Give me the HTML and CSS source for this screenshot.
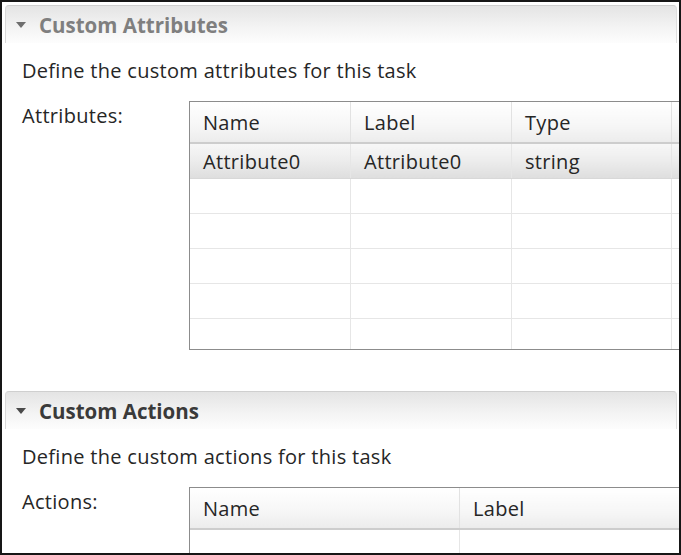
FILE: index.html
```html
<!DOCTYPE html>
<html lang="en">
<head>
    <meta charset="UTF-8">
    <title>Custom Attributes</title>
    <link rel="stylesheet" href="styles.css">
</head>
<body>
    <div class="frame">
        <div class="section-header inactive">
            <span class="twisty"></span>
            <span class="section-title">Custom Attributes</span>
        </div>
        <p class="description">Define the custom attributes for this task</p>
        <div class="field">
            <span class="field-label">Attributes:</span>
            <div class="table-box attributes">
                <table>
                    <thead>
                        <tr><th class="c1">Name</th><th class="c2">Label</th><th class="c3">Type</th><th></th></tr>
                    </thead>
                    <tbody>
                        <tr class="selected"><td>Attribute0</td><td>Attribute0</td><td>string</td><td></td></tr>
                        <tr><td></td><td></td><td></td><td></td></tr>
                        <tr><td></td><td></td><td></td><td></td></tr>
                        <tr><td></td><td></td><td></td><td></td></tr>
                        <tr><td></td><td></td><td></td><td></td></tr>
                        <tr class="last"><td></td><td></td><td></td><td></td></tr>
                    </tbody>
                </table>
            </div>
        </div>

        <div class="section-header second">
            <span class="twisty"></span>
            <span class="section-title">Custom Actions</span>
        </div>
        <p class="description">Define the custom actions for this task</p>
        <div class="field">
            <span class="field-label">Actions:</span>
            <div class="table-box actions">
                <table>
                    <thead>
                        <tr><th class="a1">Name</th><th>Label</th></tr>
                    </thead>
                    <tbody>
                        <tr><td></td><td></td></tr>
                        <tr><td></td><td></td></tr>
                    </tbody>
                </table>
            </div>
        </div>
    </div>
</body>
</html>
```

FILE: styles.css
```css
body {
    margin: 0;
    padding: 0;
    background: #ffffff;
    font-family: "Open Sans", "Noto Sans", sans-serif;
    color: #262626;
}

.frame {
    width: 681px;
    height: 555px;
    box-sizing: border-box;
    border: 2px solid #161616;
    overflow: hidden;
    background: #ffffff;
}

.section-header {
    height: 37px;
    margin: 3px 0 0 3px;
    display: flex;
    align-items: center;
    border-top: 1px solid #cfcfcf;
    border-left: 1px solid #d8d8d8;
    border-right: 1px solid #dedede;
    border-radius: 4px 4px 0 0;
    background: linear-gradient(#e4e4e4, #f3f3f3 55%, #fdfdfd);
    width: 670px;
}

.section-header.second {
    margin-top: 41px;
}

.twisty {
    width: 0;
    height: 0;
    margin: 0 13px 0 10px;
    border-left: 5px solid transparent;
    border-right: 5px solid transparent;
    border-top: 6px solid #4a4a4a;
}

.inactive .twisty {
    border-top-color: #6e6e6e;
}

.section-title {
    font-weight: bold;
    font-size: 20.5px;
    color: #3a3a3a;
}

.inactive .section-title {
    color: #7f7f7f;
}

.description {
    margin: 16px 0 0 20px;
    font-size: 20px;
    line-height: 24px;
    letter-spacing: 0.3px;
}

.field {
    display: flex;
    margin-top: 18px;
}

.field-label {
    flex: none;
    width: 167px;
    margin: 3px 0 0 20px;
    font-size: 20px;
    line-height: 24px;
    letter-spacing: 0.3px;
}

.table-box {
    flex: none;
    width: 520px;
    border: 1px solid #8c8c8c;
    border-right: none;
    overflow: hidden;
}

.table-box.attributes {
    height: 247px;
}

.table-box.actions {
    height: 80px;
}

table {
    border-collapse: collapse;
    width: 100%;
    table-layout: fixed;
}

th {
    height: 40px;
    padding: 0 0 0 13px;
    text-align: left;
    font-weight: normal;
    font-size: 20px;
    letter-spacing: 0.3px;
    background: linear-gradient(#ffffff, #f6f6f6 60%, #ececec);
    border-right: 1px solid #e2e2e2;
    border-bottom: 2px solid #cdcdcd;
}

.c1 { width: 147px; }
.c2 { width: 147px; }
.c3 { width: 146px; }
.a1 { width: 256px; }

td {
    height: 34px;
    padding: 0 0 0 13px;
    font-size: 20px;
    letter-spacing: 0.3px;
    border-right: 1px solid #e6e6e6;
    border-bottom: 1px solid #e6e6e6;
}

tr.selected td {
    background: linear-gradient(#f7f7f7, #ececec 50%, #dedede);
    border-top: 1px solid #e0e0e0;
    border-bottom: 1px solid #d8d8d8;
    border-right-color: #e6e6e6;
}

tr.last td {
    border-bottom: none;
}
```
